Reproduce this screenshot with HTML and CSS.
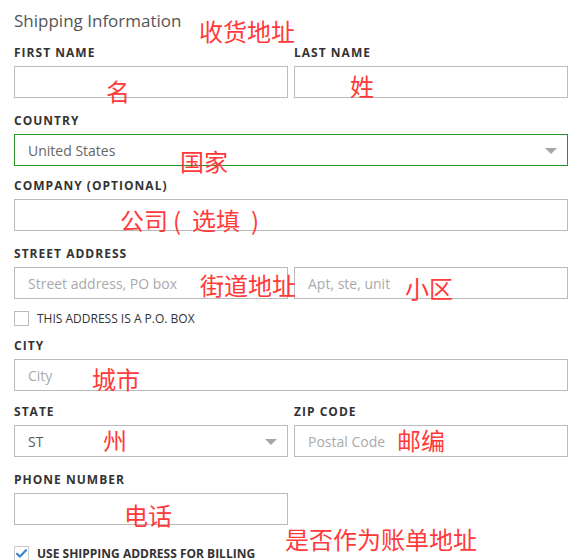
FILE: index.html
```html
<!DOCTYPE html>
<html>
<head>
<meta charset="utf-8">
<link rel="stylesheet" href="styles.css">
</head>
<body>
<div class="page">
  <form class="form">
    <h1 class="title">Shipping Information</h1>
    <div class="row two m15">
      <div class="field">
        <label class="label">FIRST NAME</label>
        <div class="input"></div>
      </div>
      <div class="field">
        <label class="label">LAST NAME</label>
        <div class="input"></div>
      </div>
    </div>
    <div class="field m12">
      <label class="label">COUNTRY</label>
      <div class="input select active"><span class="value">United States</span><span class="arrow"></span></div>
    </div>
    <div class="field m15">
      <label class="label">COMPANY (OPTIONAL)</label>
      <div class="input"></div>
    </div>
    <div class="field">
      <label class="label">STREET ADDRESS</label>
      <div class="row two">
        <div class="input"><span class="ph">Street address, PO box</span></div>
        <div class="input"><span class="ph">Apt, ste, unit</span></div>
      </div>
    </div>
    <div class="check pobox"><span class="box"></span><span class="check-text">THIS ADDRESS IS A P.O. BOX</span></div>
    <div class="field m13">
      <label class="label">CITY</label>
      <div class="input"><span class="ph">City</span></div>
    </div>
    <div class="row two m15">
      <div class="field">
        <label class="label">STATE</label>
        <div class="input select"><span class="value st">ST</span><span class="arrow"></span></div>
      </div>
      <div class="field">
        <label class="label">ZIP CODE</label>
        <div class="input"><span class="ph">Postal Code</span></div>
      </div>
    </div>
    <div class="row two">
      <div class="field">
        <label class="label">PHONE NUMBER</label>
        <div class="input"></div>
      </div>
    </div>
    <div class="check billing"><span class="box checked"><svg width="11" height="9" viewBox="0 0 11 9"><path d="M1 4.8 L4 7.6 L10 1.2" fill="none" stroke="#3a86c9" stroke-width="2.2" stroke-linecap="round" stroke-linejoin="round"/></svg></span><span class="check-text bold">USE SHIPPING ADDRESS FOR BILLING</span></div>
  </form>

  <div class="note n-title">收货地址</div>
  <div class="note n-first">名</div>
  <div class="note n-last">姓</div>
  <div class="note n-country">国家</div>
  <div class="note n-company">公司<span class="paren open">(</span>选填<span class="paren close">)</span></div>
  <div class="note n-street">街道地址</div>
  <div class="note n-apt">小区</div>
  <div class="note n-city">城市</div>
  <div class="note n-state">州</div>
  <div class="note n-zip">邮编</div>
  <div class="note n-phone">电话</div>
  <div class="note n-billing">是否作为账单地址</div>
</div>
</body>
</html>
```

FILE: styles.css
```css
* { box-sizing: border-box; }
html, body { margin: 0; padding: 0; background: #fff; }
body { font-family: "Open Sans", "Liberation Sans", sans-serif; color: #333; }
.page { position: relative; width: 577px; height: 560px; overflow: hidden; }
.form { padding: 9px 9px 0 14px; width: 577px; }
.title { margin: 0 0 12px; font-size: 17px; line-height: 24px; font-weight: 400; color: #555; }
.row.two { display: grid; grid-template-columns: 274px 274px; column-gap: 6px; }
.field { margin: 0; }
.m12 { margin-bottom: 12px; }
.m13 { margin-bottom: 13px; }
.m15 { margin-bottom: 15px; }
.label { display: block; font-size: 12px; line-height: 16px; font-weight: 700; letter-spacing: 0.085em; color: #333; margin-bottom: 5px; }
.input { height: 32px; border: 1px solid #bbb; background: #fff; display: flex; align-items: center; padding: 0 13px; font-size: 14px; position: relative; }
.input.active { border-color: #2a962a; }
.value { color: #666; }
.value.st { color: #555; }
.ph { color: #aaa; }
.arrow { position: absolute; right: 10px; top: 13px; width: 0; height: 0; border-left: 6px solid transparent; border-right: 6px solid transparent; border-top: 6px solid #a6a6a6; }
.check { display: flex; align-items: center; gap: 8px; }
.pobox { margin-top: 12px; margin-bottom: 12px; height: 15px; }
.billing { margin-top: 21px; height: 15px; }
.box { width: 15px; height: 15px; border: 1px solid #bbb; background: #fff; display: flex; align-items: center; justify-content: center; flex: none; }
.box.checked { border-color: #ccc; }
.check-text { font-size: 12px; line-height: 16px; color: #333; letter-spacing: 0; }
.check-text.bold { font-weight: 700; }

.note { position: absolute; font-family: "Noto Sans CJK SC", "Noto Sans", sans-serif; font-size: 24px; line-height: 24px; color: #ff3a3a; white-space: nowrap; }
.paren { display: inline-block; width: 24px; }
.paren.open { padding-left: 5px; }
.paren.close { padding-left: 11px; }
.n-title { left: 199px; top: 19px; }
.n-first { left: 106px; top: 79px; }
.n-last { left: 350px; top: 74px; }
.n-country { left: 180px; top: 149px; }
.n-company { left: 120px; top: 208px; }
.n-street { left: 200px; top: 273px; }
.n-apt { left: 405px; top: 276px; }
.n-city { left: 92px; top: 367px; }
.n-state { left: 103px; top: 428px; }
.n-zip { left: 397px; top: 428px; }
.n-phone { left: 124px; top: 503px; }
.n-billing { left: 285px; top: 527px; }
```
